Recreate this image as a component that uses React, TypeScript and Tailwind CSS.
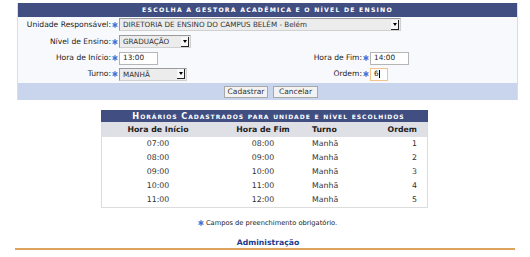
import React from "react";

const Star = () => (
  <svg width="6" height="6" viewBox="0 0 6 6" className="block">
    <g stroke="#3d6fd6" strokeWidth="1.3" strokeLinecap="round">
      <line x1="3" y1="0.7" x2="3" y2="5.3" />
      <line x1="1" y1="1.8" x2="5" y2="4.2" />
      <line x1="1" y1="4.2" x2="5" y2="1.8" />
    </g>
  </svg>
);

const Select = ({ value, className }: { value: string; className: string }) => (
  <div className={`flex h-[13px] items-center border border-t-[#9a9a9a] border-l-[#9a9a9a] border-r-[#d0d0d0] border-b-[#d0d0d0] bg-[#ececec] ${className}`}>
    <span className="flex-1 truncate pl-[3px] text-[7.2px] leading-[11px] text-[#333]">{value}</span>
    <span className="mr-[1px] flex h-[10px] w-[8px] items-center justify-center border-r border-b border-[#222] bg-[#f7f7f7]">
      <span className="border-x-[2px] border-t-[3px] border-x-transparent border-t-black" />
    </span>
  </div>
);

const Input = ({ value, className, caret }: { value: string; className: string; caret?: boolean }) => (
  <div className={`flex h-[13px] items-center border bg-white pl-[3px] text-[7.3px] leading-none text-[#222] ${className}`}>
    {value}
    {caret && <span className="h-[8px] w-px bg-black" />}
  </div>
);

const Label = ({ text, className }: { text: string; className: string }) => (
  <span className={`text-right text-[7.6px] leading-none text-[#222] ${className}`}>{text}</span>
);

const rows = [
  ["07:00", "08:00", "Manhã", "1"],
  ["08:00", "09:00", "Manhã", "2"],
  ["09:00", "10:00", "Manhã", "3"],
  ["10:00", "11:00", "Manhã", "4"],
  ["11:00", "12:00", "Manhã", "5"],
];

export default function App() {
  return (
    <div className="h-[257px] w-[530px] overflow-hidden bg-white pt-[3px] font-['DejaVu_Sans',sans-serif]">
      {/* formulario */}
      <div className="ml-[17px] w-[501px] border-x border-[#d8dde9]">
        <div className="flex h-[14px] items-center justify-center bg-[#404e82] text-[6.2px] font-bold uppercase tracking-[1.2px] text-white">
          Escolha a gestora acadêmica e o nível de ensino
        </div>
        <div className="bg-[#f8f9fc]">
          <div className="flex h-[15px] items-center">
            <Label text="Unidade Responsável:" className="w-[93px]" />
            <span className="flex w-[8px] justify-center"><Star /></span>
            <Select value="DIRETORIA DE ENSINO DO CAMPUS BELÉM - Belém" className="w-[282px]" />
          </div>
          <div className="flex h-[19px] items-center">
            <Label text="Nível de Ensino:" className="w-[93px]" />
            <span className="flex w-[8px] justify-center"><Star /></span>
            <Select value="GRADUAÇÃO" className="w-[72px]" />
          </div>
          <div className="flex h-[14px] items-center">
            <Label text="Hora de Início:" className="w-[93px]" />
            <span className="flex w-[8px] justify-center"><Star /></span>
            <div className="w-[122px]">
              <Input value="13:00" className="w-[39px] border-[#b5b5b5]" />
            </div>
            <Label text="Hora de Fim:" className="w-[121px]" />
            <span className="flex w-[8px] justify-center"><Star /></span>
            <Input value="14:00" className="w-[39px] border-[#b5b5b5]" />
          </div>
          <div className="flex h-[18px] items-center">
            <Label text="Turno:" className="w-[93px]" />
            <span className="flex w-[8px] justify-center"><Star /></span>
            <div className="w-[122px]">
              <Select value="MANHÃ" className="w-[68px]" />
            </div>
            <Label text="Ordem:" className="w-[121px]" />
            <span className="flex w-[8px] justify-center"><Star /></span>
            <Input value="6" caret className="w-[18px] border-[#f0c48a]" />
          </div>
        </div>
        <div className="flex h-[17px] items-center justify-center gap-[5px] bg-[#c8d5ec] pl-[7px]">
          <button className="flex h-[12px] w-[44px] items-center justify-center border border-[#a8a8a8] bg-[#f3f3f3] text-[7.5px] leading-none text-[#333]">
            Cadastrar
          </button>
          <button className="flex h-[12px] w-[45px] items-center justify-center border border-[#a8a8a8] bg-[#f3f3f3] text-[7.5px] leading-none text-[#333]">
            Cancelar
          </button>
        </div>
      </div>

      {/* horarios */}
      <div className="ml-[101px] mt-[10px] w-[327px]">
        <div className="flex h-[12px] items-center justify-center bg-[#404e82] pl-[8px] text-[8.2px] font-bold tracking-[0.95px] text-white [font-variant:small-caps]">
          Horários Cadastrados para unidade e nível escolhidos
        </div>
        <div className="border-x border-b border-[#dcdcdc]">
          <div className="flex h-[15px] items-center bg-[#dfe0e5] text-[7.8px] font-bold leading-none text-[#222]">
            <span className="w-[112px] text-center">Hora de Início</span>
            <span className="w-[98px] text-center">Hora de Fim</span>
            <span className="w-[60px]">Turno</span>
            <span className="flex-1 pr-[10px] text-right">Ordem</span>
          </div>
          {rows.map((r) => (
            <div key={r[0]} className="flex h-[14px] items-center bg-white text-[7.8px] leading-none text-[#333]">
              <span className="w-[112px] text-center">{r[0]}</span>
              <span className="w-[98px] text-center">{r[1]}</span>
              <span className="w-[60px]">{r[2]}</span>
              <span className="flex-1 pr-[10px] text-right">{r[3]}</span>
            </div>
          ))}
        </div>
      </div>

      <div className="mt-[10px] flex h-[10px] items-center justify-center gap-[2px] pl-[5px] text-[6.7px] leading-none text-[#222]">
        <Star />
        <span>Campos de preenchimento obrigatório.</span>
      </div>
      <div className="mt-[10px] flex h-[10px] items-center justify-center pl-[6px] text-[7.7px] font-bold leading-none text-[#1e3a8c]">
        Administração
      </div>
      <div className="ml-[15px] h-[2px] w-[500px] bg-[#dca45c]" />
    </div>
  );
}
